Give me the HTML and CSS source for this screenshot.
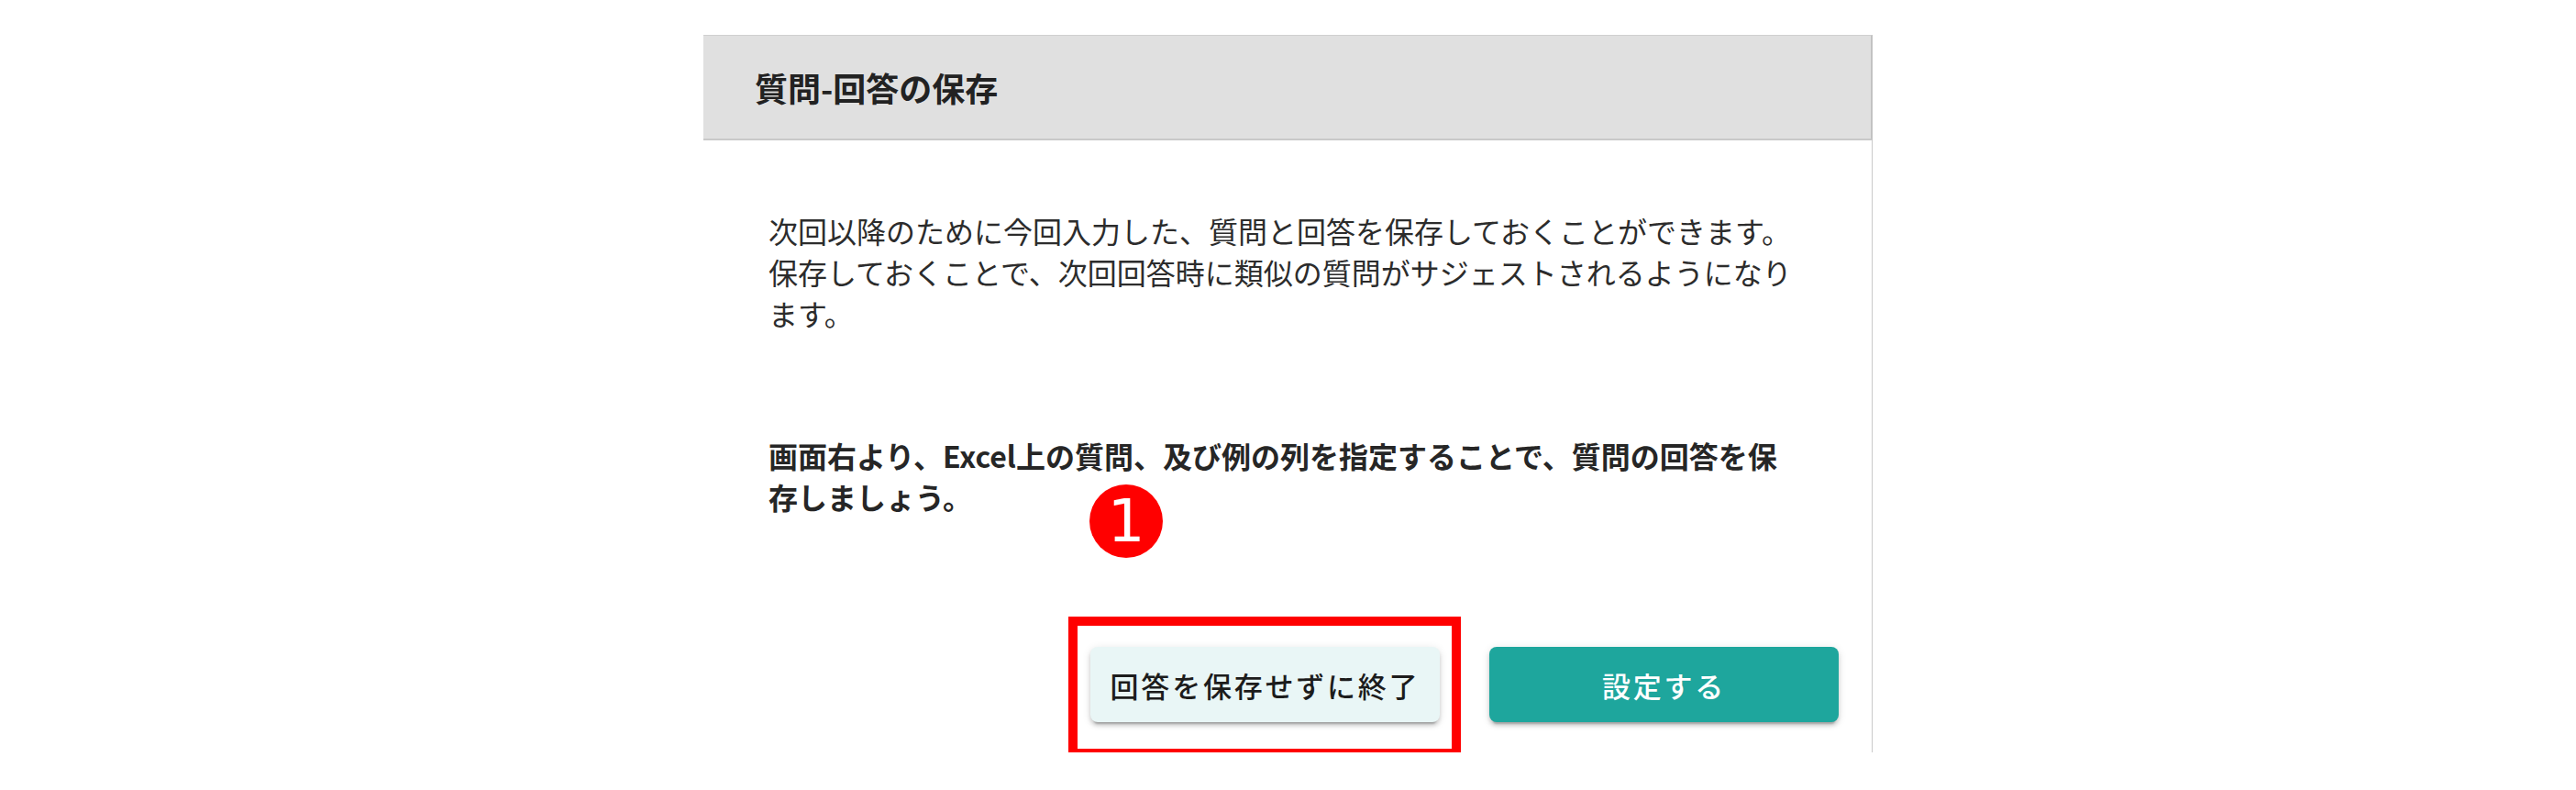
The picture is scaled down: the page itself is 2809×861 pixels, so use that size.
FILE: index.html
```html
<!DOCTYPE html>
<html lang="ja">
<head>
<meta charset="utf-8">
<title>質問-回答の保存</title>
<link rel="stylesheet" href="styles.css">
</head>
<body>
<div class="page">
  <div class="dialog">
    <div class="dialog-header">質問-回答の保存</div>
    <div class="dialog-body">
      <p class="desc">次回以降のために今回入力した、質問と回答を保存しておくことができます。保存しておくことで、次回回答時に類似の質問がサジェストされるようになります。</p>
      <p class="note">画面右より、Excel上の質問、及び例の列を指定することで、質問の回答を保存しましょう。</p>
      <div class="actions">
        <button class="btn btn-light">回答を保存せずに終了</button>
        <button class="btn btn-primary">設定する</button>
      </div>
    </div>
    <div class="step-badge">1</div>
    <div class="highlight-box"></div>
  </div>
</div>
</body>
</html>
```

FILE: styles.css
```css
html, body {
  margin: 0;
  padding: 0;
  background: #ffffff;
}

body {
  font-family: "Noto Sans CJK JP", "Noto Sans", sans-serif;
  color: #2a2a2a;
}

.page {
  display: flex;
  justify-content: center;
  padding-top: 38px;
}

.dialog {
  position: relative;
  width: 1275px;
}

.dialog-header {
  box-sizing: border-box;
  height: 115px;
  display: flex;
  align-items: center;
  padding-left: 56px;
  background: #e0e0e0;
  border-top: 1px solid #d0d0d0;
  border-bottom: 2px solid #c9c9c9;
  border-right: 2px solid #c2c2c2;
  font-size: 36px;
  font-weight: 700;
  color: #222222;
}

.dialog-body {
  box-sizing: border-box;
  height: 667px;
  padding: 76px 36px 33px 71px;
  border-right: 1px solid #cacaca;
}

.desc,
.note {
  margin: 0;
  max-width: 1130px;
  font-size: 32px;
  line-height: 45px;
}

.desc {
  font-weight: 400;
  color: #2c2c2c;
}

.note {
  margin-top: 110px;
  font-weight: 700;
  color: #262626;
}

.actions {
  display: flex;
  justify-content: flex-end;
  gap: 54px;
  margin-top: 141px;
}

.btn {
  width: 381px;
  height: 82px;
  border: none;
  border-radius: 8px;
  font-family: "Noto Sans CJK JP", "Noto Sans", sans-serif;
  font-size: 31px;
  font-weight: 500;
  letter-spacing: 0.09em;
  padding: 0;
  box-shadow: 0 6px 2px -4px rgba(0, 0, 0, 0.2), 0 4px 4px 0 rgba(0, 0, 0, 0.14), 0 2px 10px 0 rgba(0, 0, 0, 0.12);
}

.btn-light {
  background: #e9f6f6;
  color: #1c1c1c;
}

.btn-primary {
  background: #1ea69d;
  color: #ffffff;
}

.step-badge {
  position: absolute;
  left: 421px;
  top: 490px;
  width: 80px;
  height: 80px;
  border-radius: 50%;
  background: #ff0000;
  color: #ffffff;
  display: flex;
  align-items: center;
  justify-content: center;
  font-family: "DejaVu Sans", sans-serif;
  font-size: 64px;
  line-height: 1;
}

.highlight-box {
  position: absolute;
  left: 398px;
  top: 634px;
  width: 428px;
  height: 154px;
  box-sizing: border-box;
  border: 10px solid #ff0000;
  pointer-events: none;
}
```
